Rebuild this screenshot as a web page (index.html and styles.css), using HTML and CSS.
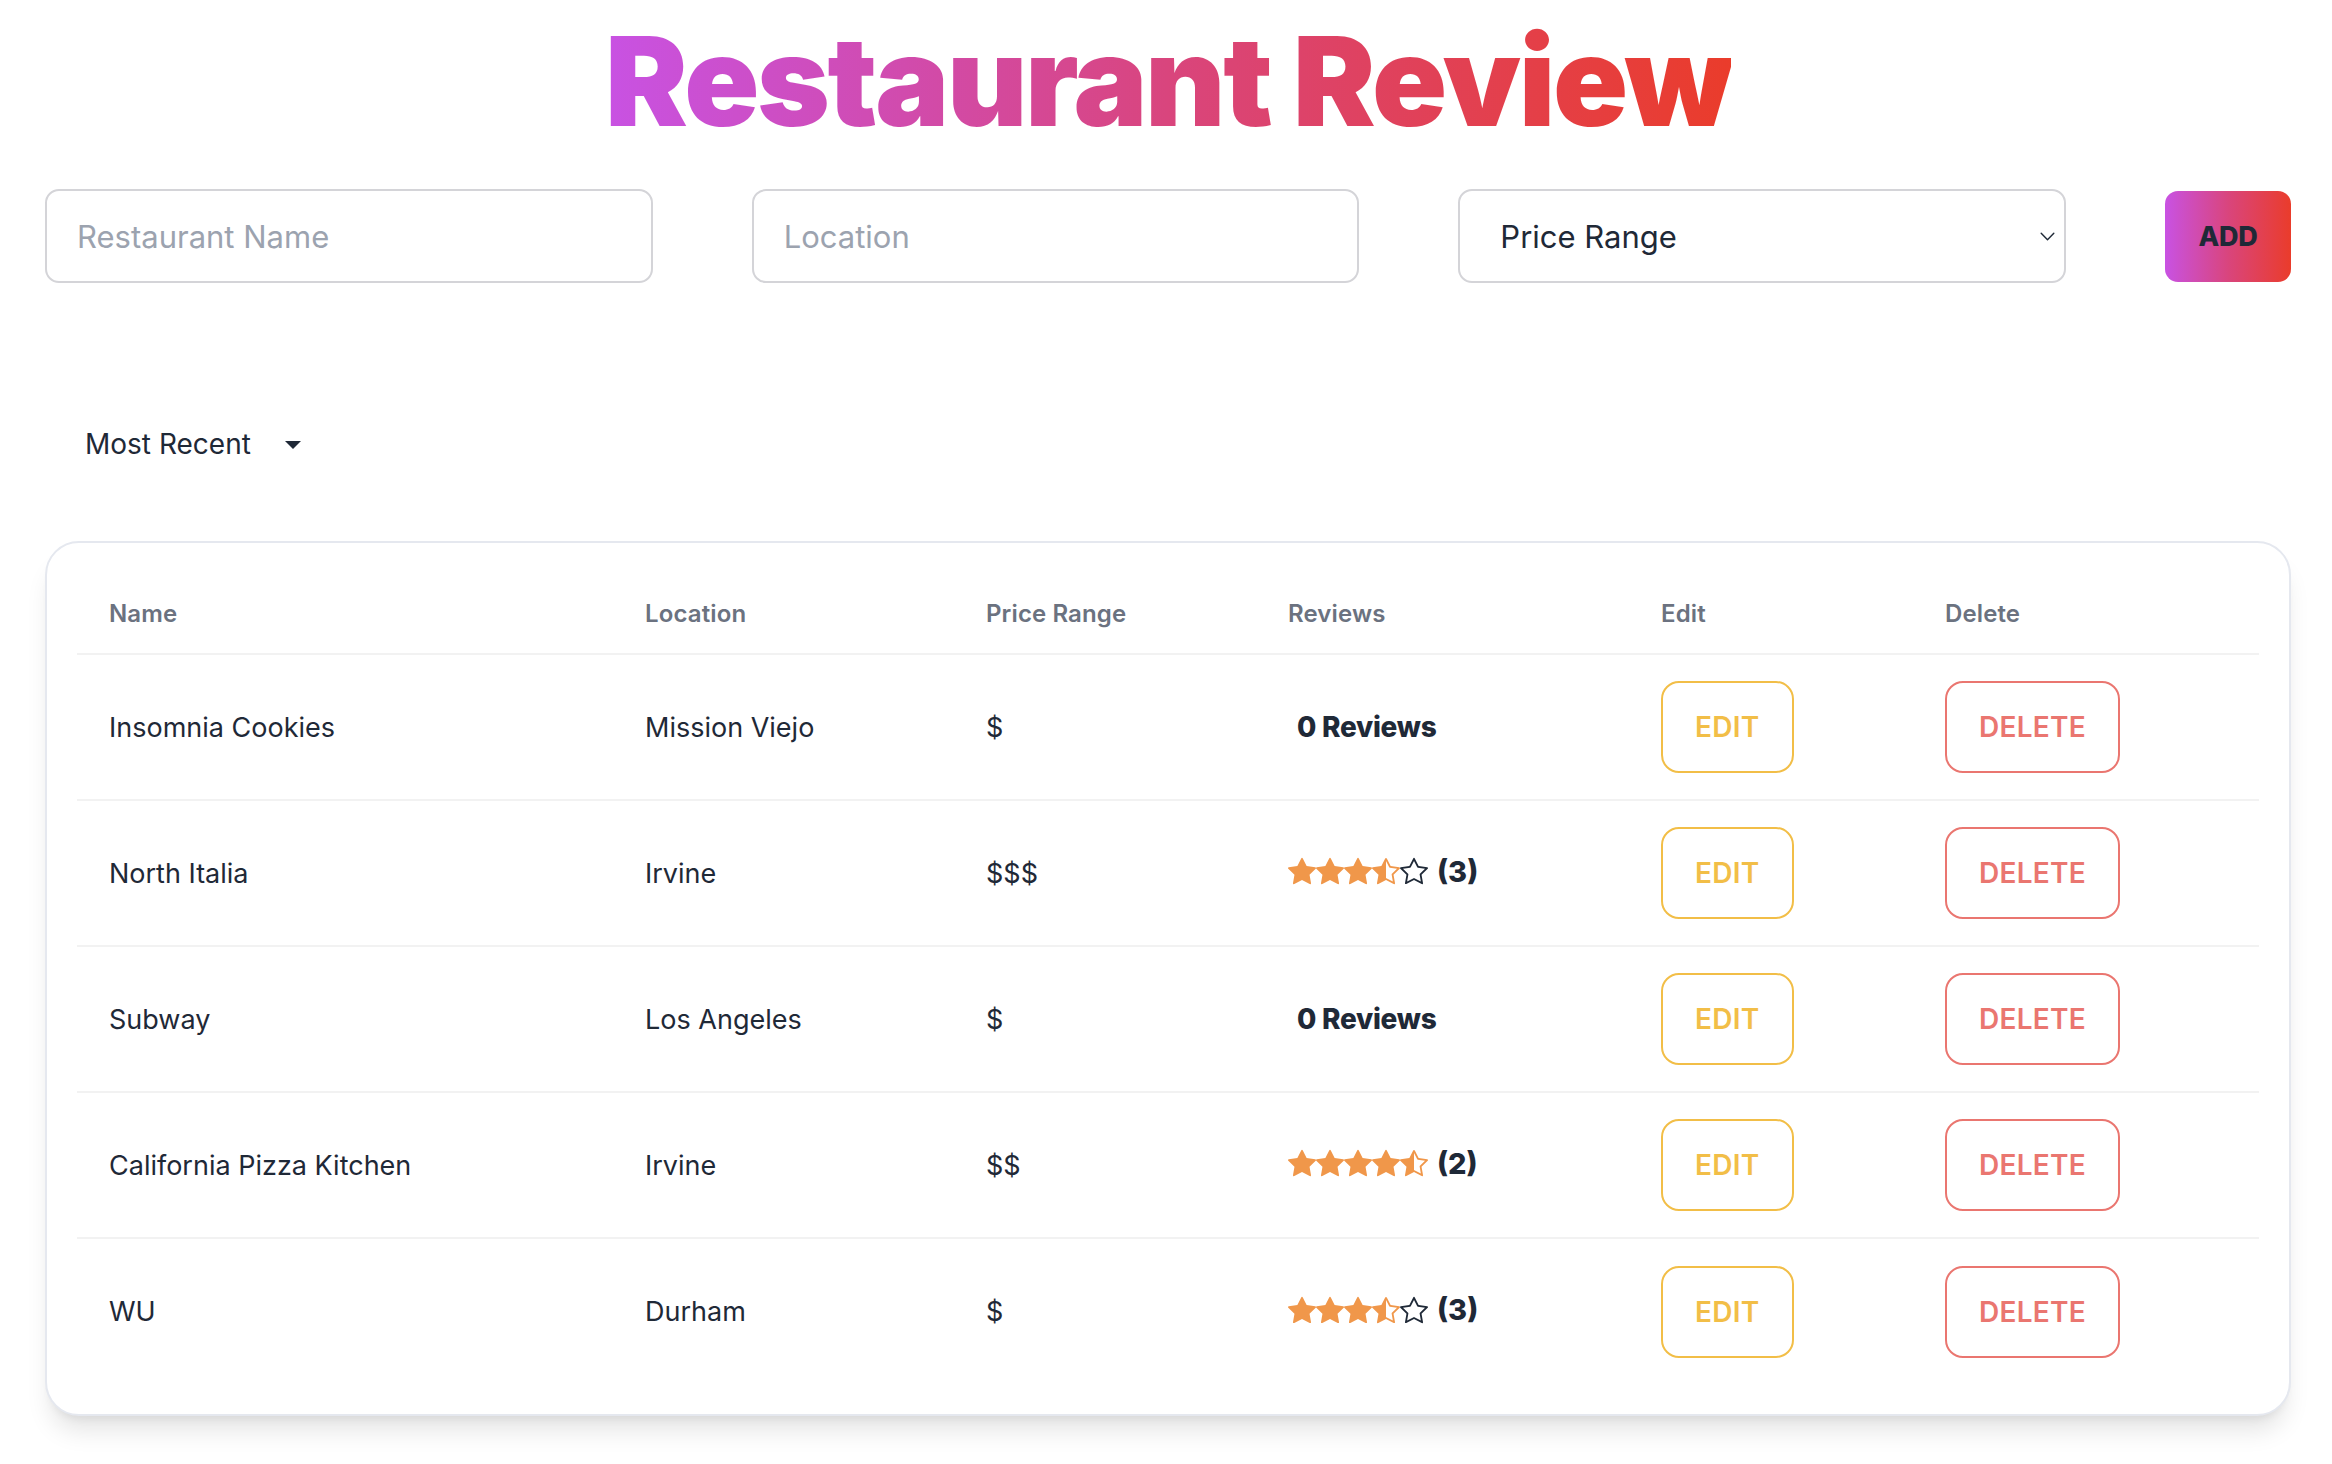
FILE: index.html
```html
<!DOCTYPE html>
<html lang="en">
<head>
<meta charset="utf-8">
<title>Restaurant Review</title>
<link rel="stylesheet" href="styles.css">
</head>
<body>
<main class="page">
  <h1 class="title">Restaurant Review</h1>

  <form class="add-form">
    <input class="field" type="text" placeholder="Restaurant Name">
    <input class="field" type="text" placeholder="Location">
    <div class="select-wrap">
      <select class="field select">
        <option>Price Range</option>
        <option>$</option>
        <option>$$</option>
        <option>$$$</option>
      </select>
      <svg class="chevron" viewBox="0 0 16 10" width="15" height="9"><path d="M1 1.5 L8 8.5 L15 1.5" fill="none" stroke="#1f2937" stroke-width="1.6" stroke-linecap="round" stroke-linejoin="round"/></svg>
    </div>
    <button class="add-btn" type="button">ADD</button>
  </form>

  <div class="sort">
    <span class="sort-label">Most Recent</span>
    <span class="sort-caret"></span>
  </div>

  <section class="card">
    <table class="table">
      <colgroup>
        <col class="c-name"><col class="c-loc"><col class="c-price"><col class="c-rev"><col class="c-edit"><col class="c-del">
      </colgroup>
      <thead>
        <tr><th>Name</th><th>Location</th><th>Price Range</th><th>Reviews</th><th>Edit</th><th>Delete</th></tr>
      </thead>
      <tbody>
        <tr>
          <td>Insomnia Cookies</td><td>Mission Viejo</td><td>$</td>
          <td><span class="no-reviews">0 Reviews</span></td>
          <td><button class="btn btn-edit">EDIT</button></td>
          <td><button class="btn btn-del">DELETE</button></td>
        </tr>
        <tr>
          <td>North Italia</td><td>Irvine</td><td>$$$</td>
          <td><span class="rating">
            <svg class="star full" viewBox="0 0 16 16"><path d="M3.612 15.443c-.386.198-.824-.149-.746-.592l.83-4.73L.173 6.765c-.329-.314-.158-.888.283-.95l4.898-.696L7.538.792c.197-.39.73-.39.927 0l2.184 4.327 4.898.696c.441.062.612.636.282.95l-3.522 3.356.83 4.73c.078.443-.36.79-.746.592L8 13.187l-4.389 2.256z"/></svg>
            <svg class="star full" viewBox="0 0 16 16"><path d="M3.612 15.443c-.386.198-.824-.149-.746-.592l.83-4.73L.173 6.765c-.329-.314-.158-.888.283-.95l4.898-.696L7.538.792c.197-.39.73-.39.927 0l2.184 4.327 4.898.696c.441.062.612.636.282.95l-3.522 3.356.83 4.73c.078.443-.36.79-.746.592L8 13.187l-4.389 2.256z"/></svg>
            <svg class="star full" viewBox="0 0 16 16"><path d="M3.612 15.443c-.386.198-.824-.149-.746-.592l.83-4.73L.173 6.765c-.329-.314-.158-.888.283-.95l4.898-.696L7.538.792c.197-.39.73-.39.927 0l2.184 4.327 4.898.696c.441.062.612.636.282.95l-3.522 3.356.83 4.73c.078.443-.36.79-.746.592L8 13.187l-4.389 2.256z"/></svg>
            <svg class="star full" viewBox="0 0 16 16"><path d="M5.354 5.119 7.538.792A.516.516 0 0 1 8 .5c.183 0 .366.097.465.292l2.184 4.327 4.898.696A.537.537 0 0 1 16 6.32a.548.548 0 0 1-.17.445l-3.523 3.356.83 4.730c.078.443-.36.79-.746.592L8 13.187l-4.389 2.256a.52.52 0 0 1-.146.05c-.342.06-.668-.254-.6-.642l.83-4.73L.173 6.765a.55.55 0 0 1-.172-.403.58.58 0 0 1 .085-.302.513.513 0 0 1 .37-.245l4.898-.696zM8 12.027a.5.5 0 0 1 .232.056l3.686 1.894-.694-3.957a.565.565 0 0 1 .162-.505l2.907-2.77-4.052-.576a.525.525 0 0 1-.393-.288L8.001 2.223 8 2.226v9.8z"/></svg>
            <svg class="star empty" viewBox="0 0 16 16"><path d="M2.866 14.85c-.078.444.36.791.746.593l4.39-2.256 4.389 2.256c.386.198.824-.149.746-.592l-.83-4.73 3.522-3.356c.33-.314.16-.888-.282-.95l-4.898-.696L8.465.792a.513.513 0 0 0-.927 0L5.354 5.12l-4.898.696c-.441.062-.612.636-.283.95l3.523 3.356-.83 4.73zm4.905-2.767-3.686 1.894.694-3.957a.565.565 0 0 0-.163-.505L1.71 6.745l4.052-.576a.525.525 0 0 0 .393-.288L8 2.223l1.847 3.658a.525.525 0 0 0 .393.288l4.052.575-2.906 2.77a.565.565 0 0 0-.163.506l.694 3.957-3.686-1.894a.503.503 0 0 0-.461 0z"/></svg>
            <span class="count">(3)</span>
          </span></td>
          <td><button class="btn btn-edit">EDIT</button></td>
          <td><button class="btn btn-del">DELETE</button></td>
        </tr>
        <tr>
          <td>Subway</td><td>Los Angeles</td><td>$</td>
          <td><span class="no-reviews">0 Reviews</span></td>
          <td><button class="btn btn-edit">EDIT</button></td>
          <td><button class="btn btn-del">DELETE</button></td>
        </tr>
        <tr>
          <td>California Pizza Kitchen</td><td>Irvine</td><td>$$</td>
          <td><span class="rating">
            <svg class="star full" viewBox="0 0 16 16"><path d="M3.612 15.443c-.386.198-.824-.149-.746-.592l.83-4.73L.173 6.765c-.329-.314-.158-.888.283-.95l4.898-.696L7.538.792c.197-.39.73-.39.927 0l2.184 4.327 4.898.696c.441.062.612.636.282.95l-3.522 3.356.83 4.73c.078.443-.36.79-.746.592L8 13.187l-4.389 2.256z"/></svg>
            <svg class="star full" viewBox="0 0 16 16"><path d="M3.612 15.443c-.386.198-.824-.149-.746-.592l.83-4.73L.173 6.765c-.329-.314-.158-.888.283-.95l4.898-.696L7.538.792c.197-.39.73-.39.927 0l2.184 4.327 4.898.696c.441.062.612.636.282.95l-3.522 3.356.83 4.73c.078.443-.36.79-.746.592L8 13.187l-4.389 2.256z"/></svg>
            <svg class="star full" viewBox="0 0 16 16"><path d="M3.612 15.443c-.386.198-.824-.149-.746-.592l.83-4.73L.173 6.765c-.329-.314-.158-.888.283-.95l4.898-.696L7.538.792c.197-.39.73-.39.927 0l2.184 4.327 4.898.696c.441.062.612.636.282.95l-3.522 3.356.83 4.73c.078.443-.36.79-.746.592L8 13.187l-4.389 2.256z"/></svg>
            <svg class="star full" viewBox="0 0 16 16"><path d="M3.612 15.443c-.386.198-.824-.149-.746-.592l.83-4.73L.173 6.765c-.329-.314-.158-.888.283-.95l4.898-.696L7.538.792c.197-.39.73-.39.927 0l2.184 4.327 4.898.696c.441.062.612.636.282.95l-3.522 3.356.83 4.73c.078.443-.36.79-.746.592L8 13.187l-4.389 2.256z"/></svg>
            <svg class="star full" viewBox="0 0 16 16"><path d="M5.354 5.119 7.538.792A.516.516 0 0 1 8 .5c.183 0 .366.097.465.292l2.184 4.327 4.898.696A.537.537 0 0 1 16 6.32a.548.548 0 0 1-.17.445l-3.523 3.356.83 4.73c.078.443-.36.79-.746.592L8 13.187l-4.389 2.256a.52.52 0 0 1-.146.05c-.342.06-.668-.254-.6-.642l.83-4.73L.173 6.765a.55.55 0 0 1-.172-.403.58.58 0 0 1 .085-.302.513.513 0 0 1 .37-.245l4.898-.696zM8 12.027a.5.5 0 0 1 .232.056l3.686 1.894-.694-3.957a.565.565 0 0 1 .162-.505l2.907-2.77-4.052-.576a.525.525 0 0 1-.393-.288L8.001 2.223 8 2.226v9.8z"/></svg>
            <span class="count">(2)</span>
          </span></td>
          <td><button class="btn btn-edit">EDIT</button></td>
          <td><button class="btn btn-del">DELETE</button></td>
        </tr>
        <tr>
          <td>WU</td><td>Durham</td><td>$</td>
          <td><span class="rating">
            <svg class="star full" viewBox="0 0 16 16"><path d="M3.612 15.443c-.386.198-.824-.149-.746-.592l.83-4.73L.173 6.765c-.329-.314-.158-.888.283-.95l4.898-.696L7.538.792c.197-.39.73-.39.927 0l2.184 4.327 4.898.696c.441.062.612.636.282.95l-3.522 3.356.83 4.73c.078.443-.36.79-.746.592L8 13.187l-4.389 2.256z"/></svg>
            <svg class="star full" viewBox="0 0 16 16"><path d="M3.612 15.443c-.386.198-.824-.149-.746-.592l.83-4.73L.173 6.765c-.329-.314-.158-.888.283-.95l4.898-.696L7.538.792c.197-.39.73-.39.927 0l2.184 4.327 4.898.696c.441.062.612.636.282.95l-3.522 3.356.83 4.73c.078.443-.36.79-.746.592L8 13.187l-4.389 2.256z"/></svg>
            <svg class="star full" viewBox="0 0 16 16"><path d="M3.612 15.443c-.386.198-.824-.149-.746-.592l.83-4.73L.173 6.765c-.329-.314-.158-.888.283-.95l4.898-.696L7.538.792c.197-.39.73-.39.927 0l2.184 4.327 4.898.696c.441.062.612.636.282.95l-3.522 3.356.83 4.73c.078.443-.36.79-.746.592L8 13.187l-4.389 2.256z"/></svg>
            <svg class="star full" viewBox="0 0 16 16"><path d="M5.354 5.119 7.538.792A.516.516 0 0 1 8 .5c.183 0 .366.097.465.292l2.184 4.327 4.898.696A.537.537 0 0 1 16 6.32a.548.548 0 0 1-.17.445l-3.523 3.356.83 4.73c.078.443-.36.79-.746.592L8 13.187l-4.389 2.256a.52.52 0 0 1-.146.05c-.342.06-.668-.254-.6-.642l.83-4.73L.173 6.765a.55.55 0 0 1-.172-.403.58.58 0 0 1 .085-.302.513.513 0 0 1 .37-.245l4.898-.696zM8 12.027a.5.5 0 0 1 .232.056l3.686 1.894-.694-3.957a.565.565 0 0 1 .162-.505l2.907-2.77-4.052-.576a.525.525 0 0 1-.393-.288L8.001 2.223 8 2.226v9.8z"/></svg>
            <svg class="star empty" viewBox="0 0 16 16"><path d="M2.866 14.85c-.078.444.36.791.746.593l4.39-2.256 4.389 2.256c.386.198.824-.149.746-.592l-.83-4.73 3.522-3.356c.33-.314.16-.888-.282-.95l-4.898-.696L8.465.792a.513.513 0 0 0-.927 0L5.354 5.12l-4.898.696c-.441.062-.612.636-.283.95l3.523 3.356-.83 4.73zm4.905-2.767-3.686 1.894.694-3.957a.565.565 0 0 0-.163-.505L1.71 6.745l4.052-.576a.525.525 0 0 0 .393-.288L8 2.223l1.847 3.658a.525.525 0 0 0 .393.288l4.052.575-2.906 2.77a.565.565 0 0 0-.163.506l.694 3.957-3.686-1.894a.503.503 0 0 0-.461 0z"/></svg>
            <span class="count">(3)</span>
          </span></td>
          <td><button class="btn btn-edit">EDIT</button></td>
          <td><button class="btn btn-del">DELETE</button></td>
        </tr>
      </tbody>
    </table>
  </section>
</main>
</body>
</html>
```

FILE: styles.css
```css
* { box-sizing: border-box; }

html, body {
  margin: 0;
  padding: 0;
  background: #ffffff;
}

body {
  font-family: Inter, "Noto Sans", "Liberation Sans", sans-serif;
  color: #1f2937;
}

.page {
  padding: 0 41px 60px 45px;
}

.title {
  width: fit-content;
  margin: 19px auto 46px;
  text-align: center;
  font-size: 124px;
  line-height: 124px;
  font-weight: 900;
  letter-spacing: -0.019em;
  background: linear-gradient(to right, #c852e3 0%, #d9457d 50%, #ea3c2b 100%);
  -webkit-background-clip: text;
  background-clip: text;
  color: transparent;
}

/* add form */
.add-form {
  display: grid;
  grid-template-columns: 1fr 1fr 1fr 126px;
  align-items: center;
  column-gap: 99px;
}

.field {
  width: 100%;
  height: 94px;
  border: 2px solid #d4d4d8;
  border-radius: 14px;
  padding: 0 30px;
  font-family: Inter, "Noto Sans", sans-serif;
  font-size: 31px;
  color: #1f2937;
  background: #fff;
  outline: none;
}

.field::placeholder {
  color: #9ca3af;
}

.select-wrap {
  position: relative;
  display: flex;
}

.select {
  -webkit-appearance: none;
  appearance: none;
  padding-left: 40px;
  font-size: 31px;
}

.chevron {
  position: absolute;
  right: 11px;
  top: 43px;
  pointer-events: none;
}

.add-btn {
  height: 91px;
  border: none;
  border-radius: 13px;
  background: linear-gradient(to right, #c852e3 0%, #d9457d 50%, #ea3c2b 100%);
  color: #1f2937;
  font-family: Inter, "Noto Sans", sans-serif;
  font-weight: 800;
  font-size: 27px;
  letter-spacing: -0.01em;
}

/* sort */
.sort {
  display: flex;
  align-items: center;
  height: 40px;
  margin: 141px 0 77px 40px;
}

.sort-label {
  font-size: 28px;
  color: #1f2937;
}

.sort-caret {
  width: 0;
  height: 0;
  margin-left: 34px;
  border-left: 8px solid transparent;
  border-right: 8px solid transparent;
  border-top: 8px solid #1f2937;
  margin-top: 2px;
}

/* card */
.card {
  border: 2px solid #e5e8ef;
  border-radius: 34px;
  padding: 30px;
  background: #fff;
  box-shadow: 0 20px 25px -5px rgba(0, 0, 0, 0.1), 0 8px 10px -6px rgba(0, 0, 0, 0.08);
}

.table {
  width: 100%;
  border-collapse: collapse;
  table-layout: fixed;
}

.c-name { width: 536px; }
.c-loc { width: 341px; }
.c-price { width: 302px; }
.c-rev { width: 373px; }
.c-edit { width: 284px; }
.c-del { width: auto; }

.table th {
  height: 81px;
  padding: 0 32px;
  text-align: left;
  font-size: 24px;
  font-weight: 600;
  letter-spacing: 0.005em;
  color: #6b7280;
  border-bottom: 2px solid #f2f2f2;
}

.table td {
  height: 146px;
  padding: 0 32px;
  font-size: 27px;
  color: #1f2937;
  vertical-align: middle;
  white-space: nowrap;
}

.table tbody tr:not(:last-child) td {
  border-bottom: 2px solid #f2f2f2;
}

.no-reviews {
  display: inline-block;
  margin-left: 9px;
  font-size: 28px;
  font-weight: 800;
  letter-spacing: -0.01em;
}

.rating {
  display: inline-flex;
  align-items: center;
}

.star {
  width: 28px;
  height: 28px;
  flex: 0 0 28px;
}

.star.full path { fill: #f0974a; }
.star.empty path { fill: #1f2937; }

.count {
  margin-left: 9px;
  font-size: 29px;
  font-weight: 800;
}

.btn {
  height: 92px;
  padding: 0 32px;
  border-radius: 18px;
  background: #fff;
  font-family: Inter, "Noto Sans", sans-serif;
  font-size: 28px;
  font-weight: 600;
  letter-spacing: 0.01em;
}

.btn-edit {
  border: 2px solid #f2be47;
  color: #f2be47;
}

.btn-del {
  border: 2px solid #ea7670;
  color: #ea7670;
}
```
